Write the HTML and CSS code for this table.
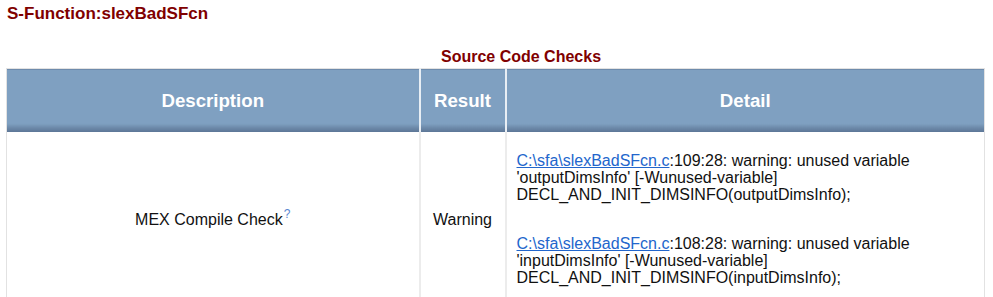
FILE: index.html
```html
<!DOCTYPE html>
<html>
<head>
<meta charset="utf-8">
<link rel="stylesheet" href="styles.css">
</head>
<body>
<div class="page">
  <h2 class="title">S-Function:slexBadSFcn</h2>
  <h3 class="caption">Source Code Checks</h3>
  <table class="checks">
    <colgroup>
      <col class="c-desc">
      <col class="c-res">
      <col class="c-det">
    </colgroup>
    <thead>
      <tr>
        <th>Description</th>
        <th>Result</th>
        <th>Detail</th>
      </tr>
    </thead>
    <tbody>
      <tr>
        <td class="desc">MEX Compile Check<sup class="help">?</sup></td>
        <td class="res">Warning</td>
        <td class="det">
          <p class="msg"><a href="#">C:\sfa\slexBadSFcn.c</a>:109:28: warning: unused variable 'outputDimsInfo' [-Wunused-variable]<br>DECL_AND_INIT_DIMSINFO(outputDimsInfo);</p>
          <p class="msg"><a href="#">C:\sfa\slexBadSFcn.c</a>:108:28: warning: unused variable 'inputDimsInfo' [-Wunused-variable]<br>DECL_AND_INIT_DIMSINFO(inputDimsInfo);</p>
        </td>
      </tr>
    </tbody>
  </table>
</div>
</body>
</html>
```
FILE: styles.css
```css
html, body {
  margin: 0;
  padding: 0;
  background: #ffffff;
}
body {
  font-family: "Liberation Sans", Arial, sans-serif;
  color: #111111;
  font-size: 16px;
}
.page {
  padding: 0 9px 0 6px;
}
.title {
  margin: 0;
  padding: 4px 0 0 1px;
  font-size: 17px;
  line-height: 19px;
  font-weight: bold;
  color: #800000;
}
.caption {
  margin: 0;
  padding: 25px 0 0 52px;
  font-size: 16px;
  line-height: 18px;
  font-weight: bold;
  color: #800000;
  text-align: center;
}
.checks {
  margin-top: 2px;
  width: 978px;
  border-collapse: collapse;
  border: 1px solid #e2e2e2;
  table-layout: fixed;
}
.c-desc { width: 413px; }
.c-res { width: 86px; }
.c-det { width: 479px; }
.checks th {
  height: 63px;
  padding: 0;
  color: #ffffff;
  font-size: 18.67px;
  font-weight: bold;
  background: linear-gradient(to bottom, #7fa0c1 0%, #7fa0c1 86%, #6e8bab 92%, #5b7494 100%);
  border-left: 2px solid #e8eef4;
  text-align: center;
  vertical-align: middle;
}
.checks th:first-child {
  border-left: none;
}
.checks td {
  border-left: 2px solid #ececec;
  vertical-align: middle;
  padding: 20px 10px 18px;
  line-height: 17px;
}
.checks td:first-child {
  border-left: none;
}
.desc, .res {
  text-align: center;
}
.help {
  color: #5a86d0;
  font-size: 12px;
  line-height: 0;
  vertical-align: 7px;
  margin-left: 1px;
}
.msg {
  margin: 0;
}
.msg + .msg {
  margin-top: 32px;
}
.msg a {
  color: #2266cc;
  text-decoration: underline;
}
```
